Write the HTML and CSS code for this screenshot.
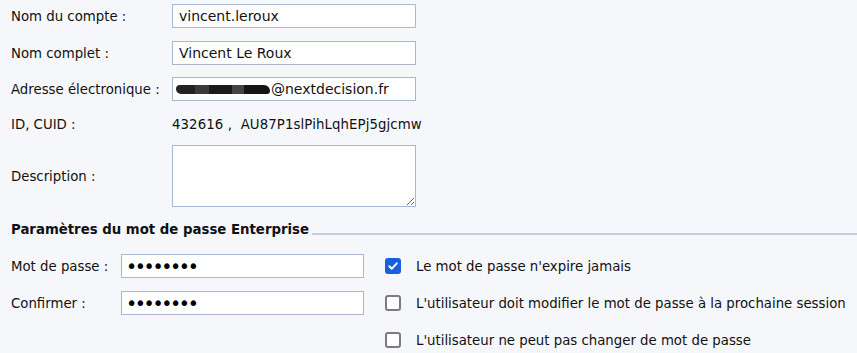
FILE: index.html
```html
<!DOCTYPE html>
<html lang="fr">
<head>
<meta charset="utf-8">
<title>Propriétés du compte</title>
<link rel="stylesheet" href="styles.css">
</head>
<body>
<div class="page">
  <div class="props">
    <div class="row r1">
      <label class="lbl">Nom du compte :</label>
      <input class="field" type="text" value="vincent.leroux">
    </div>
    <div class="row r2">
      <label class="lbl">Nom complet :</label>
      <input class="field" type="text" value="Vincent Le Roux">
    </div>
    <div class="row r3">
      <label class="lbl">Adresse électronique :</label>
      <div class="field fake"><span class="redact"></span>@nextdecision.fr</div>
    </div>
    <div class="row r4">
      <span class="lbl">ID, CUID :</span>
      <span class="val">432616 ,&nbsp; AU87P1slPihLqhEPj5gjcmw</span>
    </div>
    <div class="row r5">
      <label class="lbl">Description :</label>
      <textarea class="area"></textarea>
    </div>
  </div>

  <div class="section">
    <span class="section-title">Paramètres du mot de passe Enterprise</span>
    <span class="section-line"></span>
  </div>

  <div class="pwd">
    <label class="plbl">Mot de passe :</label>
    <input class="pfield" type="password" value="12345678">
    <div class="chk"><span class="box on"><svg width="12" height="12" viewBox="0 0 12 12"><path d="M2.3 6.2 L4.9 8.7 L9.8 3.3" fill="none" stroke="#fff" stroke-width="1.9" stroke-linecap="round" stroke-linejoin="round"/></svg></span><span>Le mot de passe n'expire jamais</span></div>

    <label class="plbl">Confirmer :</label>
    <input class="pfield" type="password" value="12345678">
    <div class="chk"><span class="box"></span><span>L'utilisateur doit modifier le mot de passe à la prochaine session</span></div>

    <span></span>
    <span></span>
    <div class="chk"><span class="box"></span><span>L'utilisateur ne peut pas changer de mot de passe</span></div>
  </div>
</div>
</body>
</html>
```

FILE: styles.css
```css
html, body {
  margin: 0;
  padding: 0;
  background: #f6f7fb;
}
body {
  font-family: "DejaVu Sans", Verdana, sans-serif;
  font-size: 13.3px;
  color: #111;
  width: 857px;
  height: 353px;
  overflow: hidden;
}
.page {
  padding: 4px 0 0 11px;
}
.props {
  display: flex;
  flex-direction: column;
}
.row {
  display: flex;
  align-items: center;
}
.r2 { margin-top: 13px; }
.r3 { margin-top: 12px; }
.r4 { margin-top: 11px; height: 24px; }
.r5 { margin-top: 9px; height: 62px; }
.lbl {
  width: 161px;
  flex: none;
}
.field {
  box-sizing: border-box;
  width: 244px;
  height: 24px;
  margin: 0;
  padding: 0 6px;
  border: 1px solid #a9b8cf;
  background: #fff;
  font: inherit;
  font-size: 14px;
  color: #111;
  outline: none;
}
.fake {
  display: flex;
  align-items: center;
  padding-left: 3px;
}
.redact {
  display: inline-block;
  width: 94px;
  height: 9px;
  margin-right: 1px;
  border-radius: 4px 6px 3px 5px;
  background: linear-gradient(90deg, #222 0 20%, #3a3a3a 20% 35%, #1a1a1a 35% 60%, #444 60% 72%, #151515 72%);
}
.val {
  font-size: 13.3px;
  letter-spacing: 0.1px;
}
.area {
  box-sizing: border-box;
  width: 244px;
  height: 62px;
  margin: 0;
  border: 1px solid #a9b8cf;
  background: #fff;
  resize: both;
  font: inherit;
}
.section {
  display: flex;
  align-items: flex-end;
  margin-top: 6px;
  height: 26px;
}
.section-title {
  font-weight: bold;
  font-size: 13.3px;
  line-height: 16px;
  padding-bottom: 1px;
}
.section-line {
  flex: 1;
  height: 2px;
  margin-left: 3px;
  margin-bottom: 4px;
  background: #c5cddb;
}
.pwd {
  display: grid;
  grid-template-columns: 110px 243px auto;
  grid-auto-rows: 24px;
  row-gap: 13px;
  column-gap: 0;
  align-items: center;
  margin-top: 15px;
}
.pfield {
  box-sizing: border-box;
  width: 243px;
  height: 24px;
  margin: 0;
  padding: 0 4px;
  border: 1px solid #a9b8cf;
  background: #fff;
  font-family: "DejaVu Sans", sans-serif;
  font-size: 19px;
  letter-spacing: -2.4px;
  color: #000;
  outline: none;
}
.chk {
  display: flex;
  align-items: center;
  padding-left: 21px;
  white-space: nowrap;
}
.box {
  box-sizing: border-box;
  width: 16px;
  height: 16px;
  margin-right: 15px;
  border: 2px solid #7b7b80;
  border-radius: 3px;
  background: #fff;
  display: flex;
  align-items: center;
  justify-content: center;
}
.box.on {
  border-color: #1560dc;
  background: #1560dc;
}
```
